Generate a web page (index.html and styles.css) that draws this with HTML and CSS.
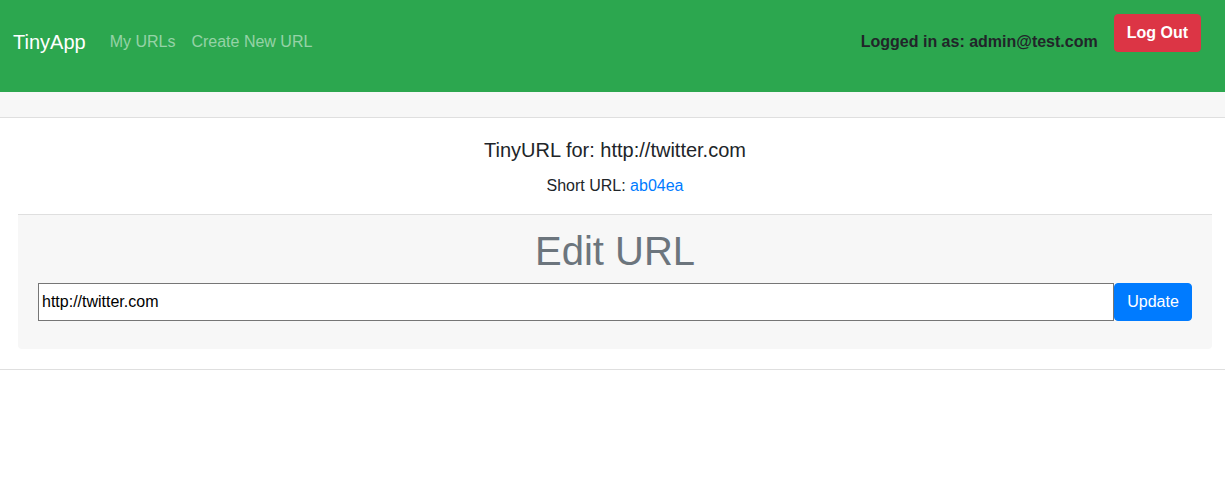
FILE: index.html
```html
<!DOCTYPE html>
<html>
<head>
<meta charset="utf-8">
<title>TinyApp</title>
<link rel="stylesheet" href="styles.css">
</head>
<body>
<nav class="navbar">
  <a class="brand" href="#">TinyApp</a>
  <div class="nav-links">
    <a class="nav-link" href="#">My URLs</a>
    <a class="nav-link" href="#">Create New URL</a>
  </div>
  <div class="nav-right">
    <span class="logged">Logged in as: admin@test.com</span>
    <button class="btn btn-danger">Log Out</button>
  </div>
</nav>
<main class="card">
  <div class="card-header"></div>
  <div class="card-body">
    <h5 class="card-title">TinyURL for: http://twitter.com</h5>
    <p class="card-text">Short URL: <a class="link" href="#">ab04ea</a></p>
    <div class="edit-footer">
      <h1 class="edit-title">Edit URL</h1>
      <form class="edit-form">
        <input class="url-input" type="text" value="http://twitter.com">
        <button class="btn btn-primary" type="button">Update</button>
      </form>
    </div>
  </div>
</main>
</body>
</html>
```

FILE: styles.css
```css
* { box-sizing: border-box; }
body {
  margin: 0;
  font-family: "Liberation Sans", Arial, sans-serif;
  font-size: 16px;
  line-height: 1.5;
  color: #212529;
  background: #fff;
}
.navbar {
  height: 92px;
  background: #2ca74f;
  display: flex;
  align-items: center;
  padding: 0 24px 8px 13px;
}
.brand {
  color: #fff;
  font-size: 20px;
  text-decoration: none;
  margin-right: 16px;
  line-height: 30px;
}
.nav-links { display: flex; }
.nav-link {
  color: rgba(255,255,255,0.5);
  text-decoration: none;
  padding: 0 8px;
}
.nav-right {
  margin-left: auto;
  display: flex;
  align-items: center;
}
.logged {
  font-weight: bold;
  color: #212529;
  margin-right: 16px;
}
.btn {
  font-family: inherit;
  font-size: 16px;
  line-height: 24px;
  padding: 6px 12px;
  border: 1px solid transparent;
  border-radius: 4px;
  color: #fff;
  cursor: pointer;
}
.btn-danger {
  background: #dc3545;
  border-color: #dc3545;
  font-weight: bold;
  margin-bottom: 18px;
}
.btn-primary {
  background: #007bff;
  border-color: #007bff;
  height: 38px;
  width: 78px;
  padding: 6px 0;
}
.card {
  display: block;
  border-bottom: 1px solid #dfdfdf;
}
.card-header {
  height: 26px;
  background: #f7f7f7;
  border-bottom: 1px solid #dfdfdf;
}
.card-body {
  padding: 20px 13px 20px 18px;
  text-align: center;
}
.card-title {
  margin: 0 0 12px;
  font-size: 20px;
  font-weight: normal;
  line-height: 24px;
}
.card-text {
  margin: 0 0 16px;
  line-height: 24px;
}
.link { color: #007bff; text-decoration: none; }
.edit-footer {
  background: #f7f7f7;
  border-top: 1px solid #dfdfdf;
  border-radius: 0 0 4px 4px;
  padding: 12px 20px 28px;
}
.edit-title {
  margin: 0 0 8px;
  font-size: 40px;
  font-weight: normal;
  line-height: 48px;
  color: #6c757d;
}
.edit-form {
  display: flex;
  margin: 0;
}
.url-input {
  flex: 1;
  height: 38px;
  border: 1px solid #767676;
  font-family: inherit;
  font-size: 16px;
  padding: 0 3px;
  color: #000;
  background: #fff;
  border-radius: 0;
}
```
